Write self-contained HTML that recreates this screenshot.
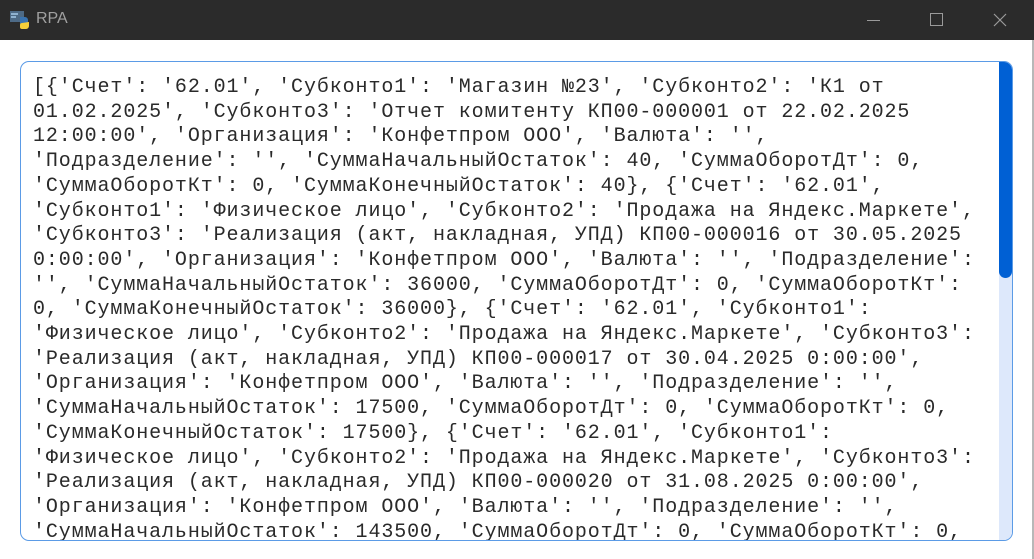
<!DOCTYPE html>
<html><head><meta charset="utf-8"><style>
html,body{margin:0;padding:0;width:1034px;height:559px;overflow:hidden;background:#fff;}
.tb{position:absolute;left:0;top:0;width:1034px;height:40px;background:#2b2b2b;}
.tt{position:absolute;left:36px;top:10px;color:#a0a0a0;font:16px "Liberation Sans",sans-serif;}
.rb{position:absolute;right:0;top:40px;width:2px;height:519px;background:#b8b8b8;}
.box{position:absolute;left:20px;top:61px;width:991px;height:478px;border:1.5px solid #5b9be6;border-radius:9px;overflow:hidden;background:#fff;}
pre{position:absolute;left:12px;top:14px;margin:0;font:20px/24.7px "Liberation Mono","Noto Sans CJK SC",monospace;letter-spacing:0.9px;color:#2a2a2a;}
.trk{position:absolute;right:0;top:0;width:13px;height:100%;background:#dde8fb;border-radius:0 0 7px 0;}
.thm{position:absolute;right:0;top:0;width:13px;height:216px;background:#0060d4;border-radius:0 7px 7px 7px;}
</style></head><body>
<div class="tb">
<svg style="position:absolute;left:9px;top:10px" width="22" height="20" viewBox="0 0 22 20">
<rect x="1" y="1" width="14" height="11" fill="#4d6a86"/><rect x="2" y="3" width="7" height="2" fill="#8fb2d0"/><rect x="2" y="6" width="5" height="2" fill="#8fb2d0"/>
<path d="M11 7h5a3 3 0 0 1 3 3v3h-6a2 2 0 0 0-2 2v-5z" fill="#3a74b0"/>
<path d="M20 12v4a3 3 0 0 1-3 3h-4a2 2 0 0 1-2-2v-2a2 2 0 0 1 2-2z" fill="#f5cf3a"/>
</svg>
<div class="tt">RPA</div>
<div style="position:absolute;left:867px;top:20px;width:13px;height:1px;background:#9a9a9a"></div>
<div style="position:absolute;left:930px;top:13px;width:11px;height:11px;border:1px solid #9a9a9a"></div>
<svg style="position:absolute;left:993px;top:13px" width="14" height="14"><path d="M1 1L13 13M13 1L1 13" stroke="#9a9a9a" stroke-width="1.2"/></svg>
</div>
<div class="rb"></div>
<div class="box">
<pre>[{'Счет': '62.01', 'Субконто1': 'Магазин №23', 'Субконто2': 'К1 от
01.02.2025', 'Субконто3': 'Отчет комитенту КП00-000001 от 22.02.2025
12:00:00', 'Организация': 'Конфетпром ООО', 'Валюта': '',
'Подразделение': '', 'СуммаНачальныйОстаток': 40, 'СуммаОборотДт': 0,
'СуммаОборотКт': 0, 'СуммаКонечныйОстаток': 40}, {'Счет': '62.01',
'Субконто1': 'Физическое лицо', 'Субконто2': 'Продажа на Яндекс.Маркете',
'Субконто3': 'Реализация (акт, накладная, УПД) КП00-000016 от 30.05.2025
0:00:00', 'Организация': 'Конфетпром ООО', 'Валюта': '', 'Подразделение':
'', 'СуммаНачальныйОстаток': 36000, 'СуммаОборотДт': 0, 'СуммаОборотКт':
0, 'СуммаКонечныйОстаток': 36000}, {'Счет': '62.01', 'Субконто1':
'Физическое лицо', 'Субконто2': 'Продажа на Яндекс.Маркете', 'Субконто3':
'Реализация (акт, накладная, УПД) КП00-000017 от 30.04.2025 0:00:00',
'Организация': 'Конфетпром ООО', 'Валюта': '', 'Подразделение': '',
'СуммаНачальныйОстаток': 17500, 'СуммаОборотДт': 0, 'СуммаОборотКт': 0,
'СуммаКонечныйОстаток': 17500}, {'Счет': '62.01', 'Субконто1':
'Физическое лицо', 'Субконто2': 'Продажа на Яндекс.Маркете', 'Субконто3':
'Реализация (акт, накладная, УПД) КП00-000020 от 31.08.2025 0:00:00',
'Организация': 'Конфетпром ООО', 'Валюта': '', 'Подразделение': '',
'СуммаНачальныйОстаток': 143500, 'СуммаОборотДт': 0, 'СуммаОборотКт': 0,</pre>
<div class="trk"></div><div class="thm"></div>
</div>
</body></html>
